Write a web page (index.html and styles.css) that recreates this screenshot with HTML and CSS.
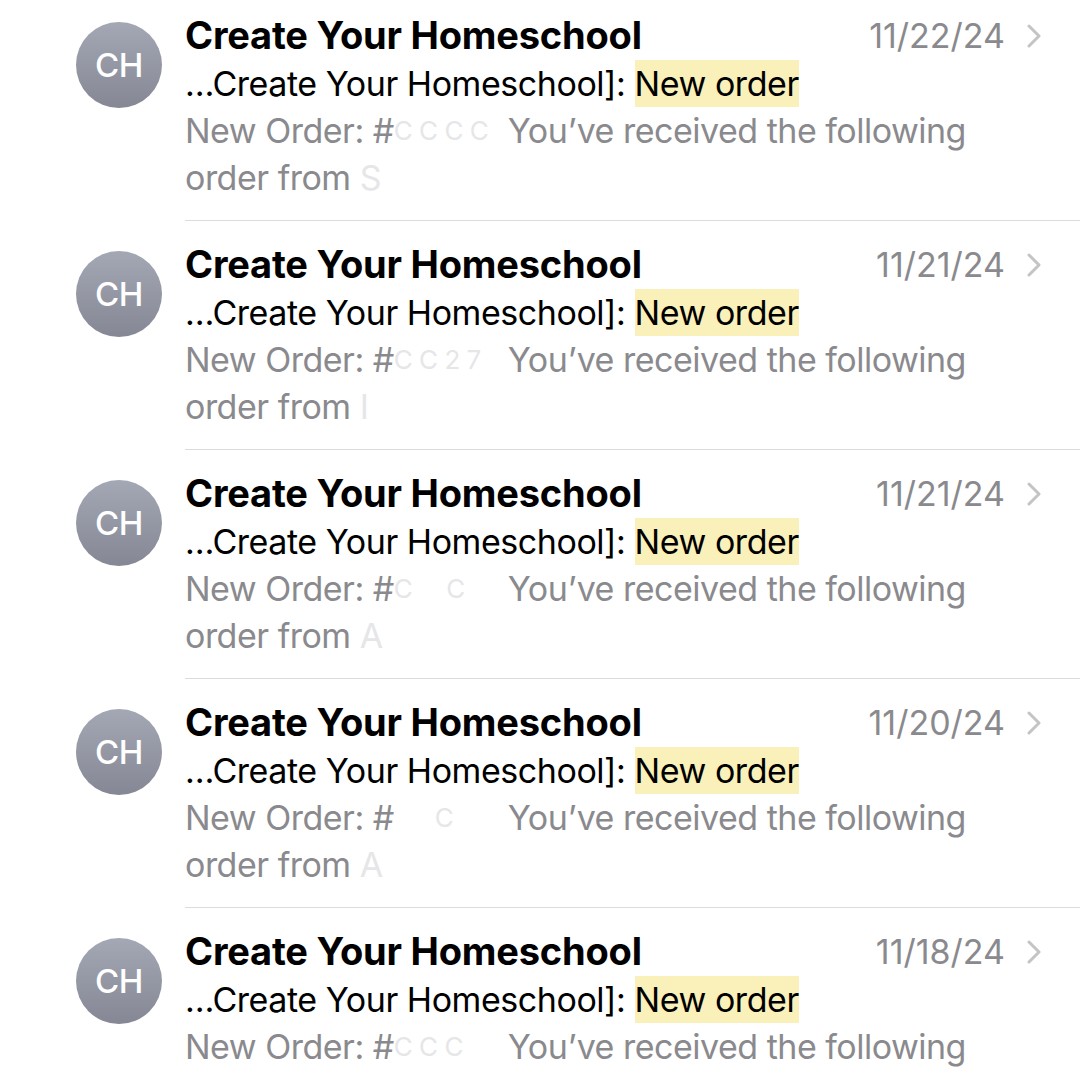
FILE: index.html
```html
<!DOCTYPE html>
<html>
<head>
<meta charset="utf-8">
<link rel="stylesheet" href="styles.css">
</head>
<body>
<div class="list">
  <div class="row">
    <div class="avatar">CH</div>
    <div class="content">
      <div class="top"><span class="sender">Create Your Homeschool</span><span class="date">11/22/24</span><svg class="chev" viewBox="0 0 14 24"><path d="M2 2 L12 12 L2 22"/></svg></div>
      <div class="subject">…Create Your Homeschool]: <span class="hl">New order</span></div>
      <div class="preview">New Order: #<span class="gap">C C C C</span> You’ve received the following<br>order from <span class="faint">S</span></div>
    </div>
  </div>
  <div class="row">
    <div class="avatar">CH</div>
    <div class="content">
      <div class="top"><span class="sender">Create Your Homeschool</span><span class="date">11/21/24</span><svg class="chev" viewBox="0 0 14 24"><path d="M2 2 L12 12 L2 22"/></svg></div>
      <div class="subject">…Create Your Homeschool]: <span class="hl">New order</span></div>
      <div class="preview">New Order: #<span class="gap">C C 2 7</span> You’ve received the following<br>order from <span class="faint">I</span></div>
    </div>
  </div>
  <div class="row">
    <div class="avatar">CH</div>
    <div class="content">
      <div class="top"><span class="sender">Create Your Homeschool</span><span class="date">11/21/24</span><svg class="chev" viewBox="0 0 14 24"><path d="M2 2 L12 12 L2 22"/></svg></div>
      <div class="subject">…Create Your Homeschool]: <span class="hl">New order</span></div>
      <div class="preview">New Order: #<span class="gap">C &nbsp; &nbsp; C</span> You’ve received the following<br>order from <span class="faint">A</span></div>
    </div>
  </div>
  <div class="row">
    <div class="avatar">CH</div>
    <div class="content">
      <div class="top"><span class="sender">Create Your Homeschool</span><span class="date">11/20/24</span><svg class="chev" viewBox="0 0 14 24"><path d="M2 2 L12 12 L2 22"/></svg></div>
      <div class="subject">…Create Your Homeschool]: <span class="hl">New order</span></div>
      <div class="preview">New Order: #<span class="gap">&nbsp; &nbsp; &nbsp; C</span> You’ve received the following<br>order from <span class="faint">A</span></div>
    </div>
  </div>
  <div class="row">
    <div class="avatar">CH</div>
    <div class="content">
      <div class="top"><span class="sender">Create Your Homeschool</span><span class="date">11/18/24</span><svg class="chev" viewBox="0 0 14 24"><path d="M2 2 L12 12 L2 22"/></svg></div>
      <div class="subject">…Create Your Homeschool]: <span class="hl">New order</span></div>
      <div class="preview">New Order: #<span class="gap">C C C</span> You’ve received the following<br>order from <span class="faint">S</span></div>
    </div>
  </div>
</div>
</body>
</html>
```
FILE: styles.css
```css
html, body {
  margin: 0;
  padding: 0;
  background: #ffffff;
  overflow: hidden;
  height: 1080px;
}
body {
  font-family: Inter, "Noto Sans", "Liberation Sans", sans-serif;
  color: #000;
}
.list {
  margin-top: -8px;
}
.row {
  display: flex;
  padding-left: 76px;
}
.avatar {
  flex: 0 0 86px;
  width: 86px;
  height: 86px;
  margin-top: 30px;
  border-radius: 50%;
  background: linear-gradient(#a4a8b4, #858894);
  color: #fff;
  font-size: 33px;
  font-weight: 500;
  display: flex;
  align-items: center;
  justify-content: center;
  letter-spacing: -0.5px;
}
.content {
  flex: 1;
  margin-left: 23px;
  padding: 19px 0 19px;
  border-bottom: 1px solid #dcdcde;
  min-width: 0;
}
.top {
  display: flex;
  align-items: center;
  height: 49px;
  padding-right: 38px;
}
.sender {
  font-size: 38px;
  font-weight: 700;
  letter-spacing: -0.2px;
  line-height: 49px;
}
.date {
  margin-left: auto;
  font-size: 34px;
  color: #8a8a8e;
  line-height: 49px;
}
.chev {
  width: 16px;
  height: 24px;
  margin-left: 21px;
  fill: none;
  stroke: #c4c4c7;
  stroke-width: 3;
  stroke-linecap: round;
  stroke-linejoin: round;
}
.subject {
  font-size: 34px;
  line-height: 47px;
  letter-spacing: -0.45px;
  white-space: nowrap;
}
.hl {
  background: #faf0ba;
  padding: 3px 0;
}
.preview {
  font-size: 34px;
  line-height: 47px;
  color: #8a8a8e;
  letter-spacing: -0.5px;
  white-space: nowrap;
}
.gap {
  display: inline-block;
  width: 105px;
  color: #e6e6e8;
  font-size: 26px;
  vertical-align: top;
}
.faint {
  color: #e6e6e8;
}
```
